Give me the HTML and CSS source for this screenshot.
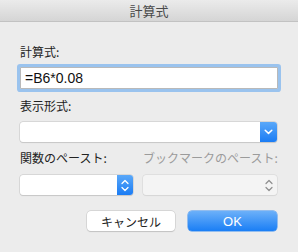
FILE: index.html
```html
<!DOCTYPE html>
<html lang="ja">
<head>
<meta charset="utf-8">
<link rel="stylesheet" href="styles.css">
</head>
<body>
<div class="window">
  <div class="titlebar">計算式</div>
  <div class="content">
    <div class="label">計算式:</div>
    <div class="textfield">=B6*0.08</div>
    <div class="label label-2">表示形式:</div>
    <div class="popup popup-wide">
      <div class="popup-body"></div>
      <div class="popup-btn">
        <svg width="9" height="6" viewBox="0 0 9 6"><path d="M1.2 1.2 L4.5 4.4 L7.8 1.2" fill="none" stroke="#fff" stroke-width="1.5" stroke-linecap="round" stroke-linejoin="round"/></svg>
      </div>
    </div>
    <div class="paste-grid">
      <div class="label">関数のペースト:</div>
      <div class="label disabled">ブックマークのペースト:</div>
      <div class="popup">
        <div class="popup-body"></div>
        <div class="popup-btn popup-btn-narrow">
          <svg width="8" height="13" viewBox="0 0 8 13"><path d="M1 4.5 L4 1.5 L7 4.5 M1 8.5 L4 11.5 L7 8.5" fill="none" stroke="#fff" stroke-width="1.3" stroke-linecap="round" stroke-linejoin="round"/></svg>
        </div>
      </div>
      <div class="popup popup-disabled">
        <div class="popup-body"></div>
        <div class="popup-icon">
          <svg width="8" height="13" viewBox="0 0 8 13"><path d="M1 4.5 L4 1.5 L7 4.5 M1 8.5 L4 11.5 L7 8.5" fill="none" stroke="#8e8e8e" stroke-width="1.2" stroke-linecap="round" stroke-linejoin="round"/></svg>
        </div>
      </div>
    </div>
    <div class="buttons">
      <div class="button cancel">キャンセル</div>
      <div class="button ok">OK</div>
    </div>
  </div>
</div>
</body>
</html>
```

FILE: styles.css
```css
html, body {
  margin: 0;
  padding: 0;
  background: #ececec;
}
body {
  width: 298px;
  height: 252px;
  overflow: hidden;
  font-family: "Liberation Sans", "Noto Sans CJK JP", sans-serif;
}
.window {
  width: 298px;
  height: 252px;
  background: #ececec;
  display: flex;
  flex-direction: column;
}
.titlebar {
  height: 21px;
  border-bottom: 1px solid #c2c2c2;
  background: linear-gradient(#ebebeb, #d5d5d5);
  text-align: center;
  font-family: "Noto Sans CJK JP", sans-serif;
  font-size: 13px;
  line-height: 22px;
  color: #4a4a4a;
}
.content {
  padding: 22px 20px 0 20px;
  display: flex;
  flex-direction: column;
}
.label {
  font-family: "Noto Sans CJK JP", sans-serif;
  font-size: 12px;
  line-height: 16px;
  height: 16px;
  color: #222;
  white-space: nowrap;
}
.label.disabled {
  color: #9b9b9b;
}
.textfield {
  margin-top: 7px;
  width: 256px;
  height: 20px;
  border: 1px solid #b9b9b9;
  background: #fff;
  box-shadow: 0 0 0 3px #9ac3ee;
  border-radius: 1px;
  font-size: 14px;
  line-height: 21px;
  padding-left: 4px;
  box-sizing: content-box;
  width: 252px;
  color: #111;
}
.label-2 {
  margin-top: 9px;
}
.popup {
  display: flex;
  height: 20px;
  border-radius: 3px;
  box-shadow: 0 0 0 0.5px #c5c5c5, 0 0.5px 1px rgba(0,0,0,0.15);
  background: #fff;
  overflow: hidden;
}
.popup-wide {
  margin-top: 8px;
  width: 257px;
}
.popup-body {
  flex: 1;
}
.popup-btn {
  width: 17px;
  background: linear-gradient(#5aa8f9, #1b7cf4);
  display: flex;
  align-items: center;
  justify-content: center;
}
.popup-btn-narrow {
  width: 16px;
}
.paste-grid {
  margin-top: 8px;
  display: grid;
  grid-template-columns: 113px 134px;
  column-gap: 10px;
  row-gap: 9px;
}
.popup-disabled {
  background: #f4f4f4;
  box-shadow: 0 0 0 0.5px #d4d4d4, 0 0.5px 1px rgba(0,0,0,0.08);
}
.popup-icon {
  width: 17px;
  display: flex;
  align-items: center;
  justify-content: center;
}
.buttons {
  margin-top: 16px;
  display: flex;
  justify-content: flex-end;
  gap: 13px;
  padding-right: 1px;
}
.button {
  height: 20px;
  border-radius: 4px;
  display: flex;
  align-items: center;
  justify-content: center;
  font-size: 13px;
}
.cancel {
  width: 88px;
  background: #fff;
  box-shadow: 0 0 0 0.5px #c4c4c4, 0 0.5px 1px rgba(0,0,0,0.18);
  font-family: "Noto Sans CJK JP", sans-serif;
  font-size: 12px;
  color: #222;
}
.ok {
  width: 89px;
  background: linear-gradient(#6cb0f9, #1a7ef5);
  box-shadow: 0 0 0 0.5px #3b8ef0;
  color: #fff;
}
```
